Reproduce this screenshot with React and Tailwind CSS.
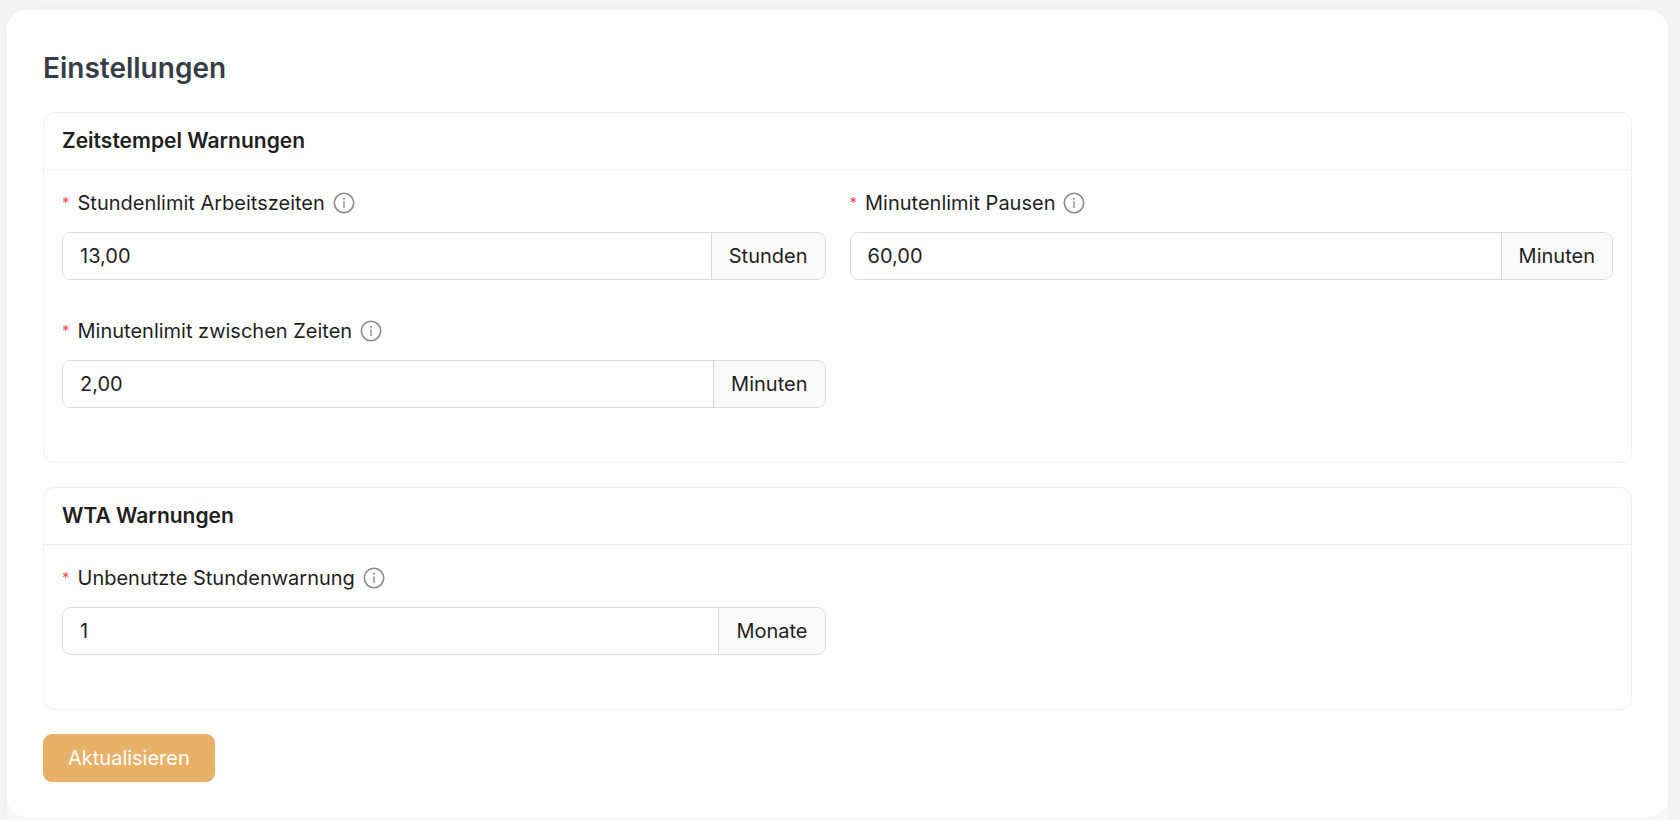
import { useId } from "react";

function InfoIcon() {
  return (
    <svg
      viewBox="0 0 22 22"
      className="h-[22px] w-[22px] shrink-0"
      fill="none"
      aria-hidden="true"
    >
      <circle cx="11" cy="11" r="9.7" stroke="#8c8c8c" strokeWidth="1.6" />
      <circle cx="11" cy="6.7" r="1" fill="#8c8c8c" />
      <path d="M11 9.2V16" stroke="#8c8c8c" strokeWidth="1.4" />
    </svg>
  );
}

function Field({ label, value, unit }) {
  const id = useId();
  return (
    <div className="mb-9 min-w-0">
      <div className="mb-[14px] flex h-[30px] items-center">
        <span className="mr-2 pb-[2px] text-[15px] leading-none text-[#ff4d4f]" aria-hidden="true">
          *
        </span>
        <label htmlFor={id} className="mr-2">
          {label}
        </label>
        <InfoIcon />
      </div>
      <div className="flex h-12 overflow-hidden rounded-[9px] border border-[#d9d9d9]">
        <input
          id={id}
          type="text"
          required
          defaultValue={value}
          className="min-w-0 flex-1 bg-white px-[17px] outline-none"
        />
        <span className="flex items-center border-l border-[#d9d9d9] bg-[#fafafa] px-[17px]">
          {unit}
        </span>
      </div>
    </div>
  );
}

function Section({ title, children }) {
  return (
    <section className="mb-6 rounded-xl border border-[#f0f0f0]">
      <h2 className="flex h-[57px] items-center border-b border-[#f0f0f0] px-[18px] text-[21px] font-semibold">
        {title}
      </h2>
      <div className="grid grid-cols-2 gap-x-6 p-[18px]">{children}</div>
    </section>
  );
}

export default function App() {
  return (
    <div className="flex min-h-screen flex-col bg-[#f4f4f4] pt-[10px] pr-3 pl-[7px] font-['Inter','Liberation_Sans',sans-serif] text-[20px] leading-[30px] text-[#1f1f1f]">
      <div className="flex-1 rounded-t-[20px] bg-[#f8f8f8] shadow-[0_0_16px_rgba(0,0,0,0.03)]">
        <main className="rounded-[20px] bg-white px-9 pt-9 pb-[35px]">
          <h1 className="mb-[22px] text-[28px] leading-[44px] font-semibold text-[#373d47]">
            Einstellungen
          </h1>
          <form onSubmit={(e) => e.preventDefault()}>
            <Section title="Zeitstempel Warnungen">
              <Field label="Stundenlimit Arbeitszeiten" value="13,00" unit="Stunden" />
              <Field label="Minutenlimit Pausen" value="60,00" unit="Minuten" />
              <Field label="Minutenlimit zwischen Zeiten" value="2,00" unit="Minuten" />
            </Section>
            <Section title="WTA Warnungen">
              <Field label="Unbenutzte Stundenwarnung" value="1" unit="Monate" />
            </Section>
            <button
              type="submit"
              className="h-12 rounded-[9px] bg-[#e9b067] px-[25px] text-white shadow-[0_2px_2px_rgba(0,0,0,0.03)]"
            >
              Aktualisieren
            </button>
          </form>
        </main>
      </div>
    </div>
  );
}
